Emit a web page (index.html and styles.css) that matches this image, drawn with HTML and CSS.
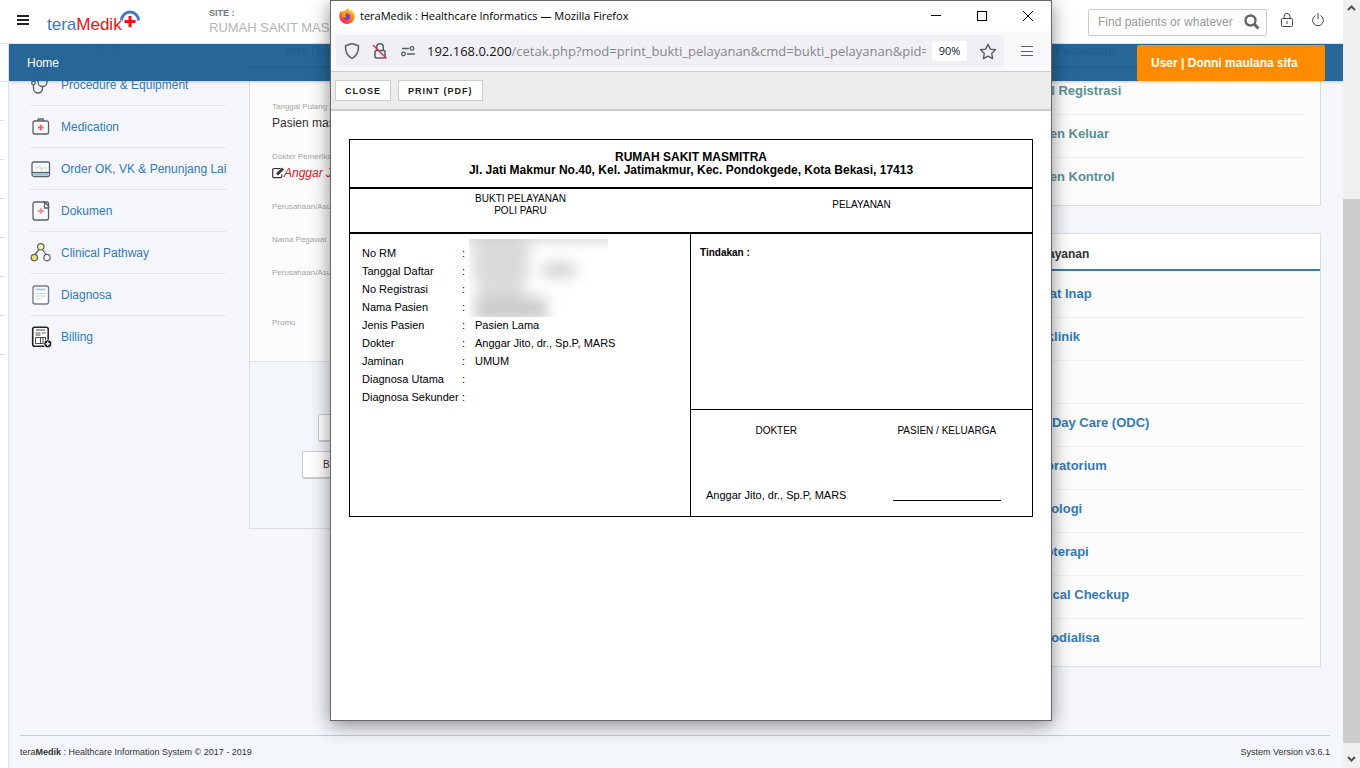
FILE: index.html
```html
<!DOCTYPE html>
<html lang="id">
<head>
<meta charset="utf-8">
<title>teraMedik : Healthcare Informatics</title>
<link rel="stylesheet" href="styles.css">
</head>
<body>
<div class="desktop">
  <div class="app">
    <header class="topbar">
      <button class="icon-btn menu-btn" aria-label="Menu">
        <svg width="12" height="10" viewBox="0 0 12 10"><path d="M0 1h12M0 5h12M0 9h12" stroke="#222" stroke-width="2"/></svg>
      </button>
      <a class="logo" href="#" aria-label="teraMedik">
        <span class="logo-tera">tera</span><span class="logo-medik">Medik</span>
        <svg class="logo-mark" width="20" height="20" viewBox="0 0 20 20"><path d="M1.500 10.500a8.500 8.500 0 0 1 17 0" fill="none" stroke="#3f78cf" stroke-width="3"/><path d="M10 6v11M4.500 11.500h11" stroke="#f00d14" stroke-width="3"/></svg>
      </a>
      <div class="site">
        <div class="site-label">SITE :</div>
        <div class="site-name">RUMAH SAKIT MASMITRA</div>
      </div>
      <div class="tools">
        <form class="search">
          <input class="search-input" type="text" placeholder="Find patients or whatever" aria-label="Find patients or whatever">
          <button class="icon-btn" type="button" aria-label="Search">
            <svg width="16" height="16" viewBox="0 0 16 16"><circle cx="6.500" cy="6.500" r="5" fill="none" stroke="#666" stroke-width="2.400"/><path d="M10 10l4.500 4.500" stroke="#666" stroke-width="3"/></svg>
          </button>
        </form>
        <button class="icon-btn" aria-label="Lock">
          <svg width="12" height="14" viewBox="0 0 12 14" fill="none" stroke="#444"><rect x=".5" y="5.500" width="11" height="8" rx="1"/><path d="M3 5.500V3.500a3 3 0 0 1 6 0v2M6 8v3"/></svg>
        </button>
        <button class="icon-btn" aria-label="Log out">
          <svg width="14" height="14" viewBox="0 0 14 14" fill="none" stroke="#444"><path d="M4.500 2.500a5.400 5.400 0 1 0 5 0M7 0v6"/></svg>
        </button>
      </div>
    </header>

    <div class="below">
      <ul class="strip"><li></li><li></li><li></li><li></li><li></li><li></li><li></li><li></li></ul>
      <div class="content">
        <nav class="nav">
          <a class="nav-home" href="#">Home</a>
          <a class="nav-user" href="#">User | Donni maulana sifa</a>
        </nav>
        <div class="columns">
          <aside class="side">
            <ul class="side-list">
              <li><a href="#"><span class="side-icon"></span><span>Penunjang Medis</span></a></li>
              <li><a href="#"><svg class="side-icon" viewBox="0 0 22 22" fill="none" stroke="#596069" stroke-width="1.300"><path d="M8 4v4a4.500 4.500 0 0 0 9 0V4M12.500 13v1.500a4.500 4.500 0 0 1-9 0V11"/><circle cx="3.500" cy="9" r="1.800"/></svg><span>Procedure &amp; Equipment</span></a></li>
              <li><a href="#"><svg class="side-icon" viewBox="0 0 22 22" fill="none" stroke="#596069" stroke-width="1.300"><rect x="3" y="5" width="15.500" height="13" rx="2" fill="#fff"/><path d="M7.500 5l1-2h4.500l1 2"/><path d="M10.800 8.800v5.600M8 11.600h5.600" stroke="#f0666a" stroke-width="2"/></svg><span>Medication</span></a></li>
              <li><a href="#"><svg class="side-icon" viewBox="0 0 22 22" fill="none" stroke="#596069" stroke-width="1.300"><rect x="2" y="4" width="17.500" height="14.500" rx="2" fill="#fff"/><path d="M3 16.500h15.500" stroke="#9cc3e6" stroke-width="2.500"/><path d="M2 14.500h17.500"/><path d="M5 10h3l1.500-2.500 2 5 1.500-3 1 .5h3" stroke="#c9ced4" stroke-width="1"/></svg><span>Order OK, VK &amp; Penunjang Lain</span></a></li>
              <li><a href="#"><svg class="side-icon" viewBox="0 0 22 22" fill="none" stroke="#596069" stroke-width="1.300"><path d="M5 2h9.500l4 4v12a2 2 0 0 1-2 2H5a2 2 0 0 1-2-2V4a2 2 0 0 1 2-2z" fill="#fff"/><path d="M14.500 2v6h4V3.500a2 2 0 0 0-2-1.500z"/><path d="M10.800 8.200v5.600M8 11h5.600" stroke="#f08d96" stroke-width="2"/></svg><span>Dokumen</span></a></li>
              <li><a href="#"><svg class="side-icon" viewBox="0 0 22 22" fill="none" stroke="#5c6166" stroke-width="1.200"><path d="M9.500 7l-5 6M12 7l4.500 6"/><circle cx="10.800" cy="4.800" r="3.200" fill="#f7f3a6"/><circle cx="4.300" cy="15.600" r="3.200" fill="#f1e168"/><circle cx="17" cy="15.600" r="3.200" fill="#fff"/></svg><span>Clinical Pathway</span></a></li>
              <li><a href="#"><svg class="side-icon" viewBox="0 0 22 22" fill="none"><rect x="3" y="2" width="15.500" height="18" rx="2" fill="#fff" stroke="#757c88" stroke-width="1.400"/><path d="M5.500 5.500h10" stroke="#b9c9e2" stroke-width="2"/><path d="M5.500 9.500h10M5.500 12h10M5.500 15h6" stroke="#c6d3e8"/></svg><span>Diagnosa</span></a></li>
              <li><a href="#"><svg class="side-icon" viewBox="0 0 22 22" fill="none" stroke="#222"><rect x="2.700" y="1.200" width="15.500" height="19" rx="2" fill="#fff" stroke-width="1.600"/><path d="M6 4h9M5.500 7h5M12 7h3.500M5.500 9h5M5.500 11.500h10v6h-10zM10.500 11.500v6M13 11.500v6" stroke-width=".8"/><circle cx="17.800" cy="17.800" r="4" fill="#111" stroke="#fff" stroke-width=".8"/><path d="M17.800 15.600v4.400M15.600 17.800h4.400" stroke="#fff" stroke-width="1.300"/></svg><span>Billing</span></a></li>
            </ul>
          </aside>

          <main class="detail card">
            <h2 class="card-title detail-title">Info Registrasi</h2>
            <dl class="fields">
              <div class="field tall"><dt>Tanggal Pulang</dt><dd>Pasien masih dirawat</dd></div>
              <div class="field tall"><dt>Dokter Pemeriksa</dt><dd class="doctor"><svg width="12" height="12" viewBox="0 0 12 12" fill="none" stroke="#333"><path d="M8.500 1.500H2A1.300 1.300 0 0 0 .7 2.800v6.500a1.300 1.300 0 0 0 1.300 1.300h6.500a1.300 1.300 0 0 0 1.300-1.300V7.500" stroke-width="1.200"/><path d="M5 7.500l6-6" stroke-width="2.600"/></svg><span>Anggar Jito, dr., Sp.P</span></dd></div>
              <div class="field"><dt>Perusahaan/Asuransi</dt></div>
              <div class="field"><dt>Nama Pegawai</dt></div>
              <div class="field tall"><dt>Perusahaan/Asuransi</dt></div>
              <div class="field"><dt>Promo</dt></div>
            </dl>
            <div class="actions">
              <div class="action-row inset"><button class="action">Resume Medis</button></div>
              <div class="action-row"><button class="action">Bukti Pelayanan</button></div>
            </div>
          </main>

          <aside class="right">
            <section class="card">
              <h2 class="card-title">Info Perawatan</h2>
              <ul class="links teal">
                <li><a href="#">Batal Registrasi</a></li>
                <li><a href="#">Pasien Keluar</a></li>
                <li><a href="#">Pasien Kontrol</a></li>
              </ul>
            </section>
            <section class="card">
              <h2 class="card-title">Pelayanan</h2>
              <ul class="links">
                <li><a href="#">Rawat Inap</a></li>
                <li><a href="#">Poliklinik</a></li>
                <li><a href="#">IGD</a></li>
                <li><a href="#">One Day Care (ODC)</a></li>
                <li><a href="#">Laboratorium</a></li>
                <li><a href="#">Radiologi</a></li>
                <li><a href="#">Fisioterapi</a></li>
                <li><a href="#">Medical Checkup</a></li>
                <li><a href="#">Hemodialisa</a></li>
              </ul>
            </section>
          </aside>
        </div>
        <footer class="footer">
          <div class="footer-line">
            <span>tera<b>Medik</b> : Healthcare Information System © 2017 - 2019</span>
            <span>System Version v3.6.1</span>
          </div>
        </footer>
      </div>
    </div>
  </div>

  <div class="scrollbar">
    <svg class="arrow" width="9" height="6" viewBox="0 0 9 6"><path d="M1 5l3.500-3.500L8 5" fill="none" stroke="#505050" stroke-width="2"/></svg>
    <div class="track"><div class="thumb"></div></div>
    <svg class="arrow" width="9" height="6" viewBox="0 0 9 6"><path d="M1 1l3.500 3.500L8 1" fill="none" stroke="#505050" stroke-width="2"/></svg>
  </div>
</div>

<div class="window">
  <div class="titlebar">
    <svg width="16" height="16" viewBox="0 0 16 16">
      <defs><linearGradient id="fox" x1=".8" y1="0" x2=".2" y2="1"><stop offset="0" stop-color="#ffe03a"/><stop offset=".45" stop-color="#ff8a16"/><stop offset="1" stop-color="#f5156c"/></linearGradient></defs>
      <path d="M1.500 3l1.300 1.200C4 3 5 3 6 3.200 6.500 1.500 8 .8 9.500 0c0 1.500 1 2 2 3l1-1c2 2 3.500 4 3.300 7A7.800 7.800 0 0 1 .3 9C.1 6.500.6 4.500 1.500 3z" fill="url(#fox)"/>
      <path d="M5 7c1.500-2 4.500-2 6 0 1 2.500-.5 5-3 5s-3.500-1.500-3.800-3c1 .8 2 .6 3-.2C6.500 8.300 6 7.500 5 7z" fill="#7b3fd0"/>
      <path d="M3 4.500c1.500 0 3 .3 4.500 1.800C6 6.800 6 8 7 9c-1.500.8-3 .3-4-1z" fill="#ff9a1a"/>
    </svg>
    <span class="window-title">teraMedik : Healthcare Informatics — Mozilla Firefox</span>
    <div class="window-buttons">
      <button class="icon-btn" aria-label="Minimize"><svg width="10" height="10" viewBox="0 0 10 10"><path d="M0 4.500h10" stroke="#000"/></svg></button>
      <button class="icon-btn" aria-label="Maximize"><svg width="10" height="10" viewBox="0 0 10 10"><rect x=".5" y=".5" width="9" height="9" fill="none" stroke="#000"/></svg></button>
      <button class="icon-btn" aria-label="Close window"><svg width="10" height="10" viewBox="0 0 10 10"><path d="M0 0l10 10M10 0L0 10" stroke="#000"/></svg></button>
    </div>
  </div>
  <div class="browser-bar">
    <div class="urlbar">
      <svg width="16" height="18" viewBox="0 0 16 18" fill="none" stroke="#5b5b66" stroke-width="1.500"><path d="M8 1.500l6.500 2.200c.3 5.500-1 9.800-6.500 12.600C2.500 13.500 1.200 9.200 1.500 3.700z" stroke-linejoin="round"/></svg>
      <svg width="16" height="18" viewBox="0 0 16 18" fill="none" stroke="#5b5b66" stroke-width="1.500"><rect x="3" y="8.500" width="10" height="7.500" rx="1"/><path d="M4.700 8.500V5a3.300 3.300 0 0 1 6.600 0v3.500"/><path d="M1 3l13.500 13.500" stroke="#e22850" stroke-width="1.400"/></svg>
      <svg width="16" height="12" viewBox="0 0 16 12" fill="none" stroke="#5b5b66" stroke-width="1.300"><path d="M2 3.500h7M7 9h8"/><circle cx="12" cy="3.500" r="1.800"/><circle cx="3.500" cy="9" r="1.800"/></svg>
      <div class="url"><span class="url-host">192.168.0.200</span>/cetak.php?mod=print_bukti_pelayanan&amp;cmd=bukti_pelayanan&amp;pid=1</div>
      <button class="zoom">90%</button>
      <button class="icon-btn" aria-label="Bookmark"><svg width="18" height="17" viewBox="0 0 18 17"><path d="M9 1.300l2.300 4.800 5.200.7-3.800 3.600.9 5.200L9 13.100l-4.600 2.500.9-5.200L1.500 6.800l5.200-.7z" fill="none" stroke="#5b5b66" stroke-width="1.400" stroke-linejoin="round"/></svg></button>
    </div>
    <button class="icon-btn" aria-label="Application menu"><svg width="12" height="10" viewBox="0 0 12 10"><path d="M0 .5h12M0 5.500h12M0 9.500h12" stroke="#5b5b66"/></svg></button>
  </div>
  <div class="print-bar">
    <button class="print-btn">CLOSE</button>
    <button class="print-btn">PRINT (PDF)</button>
  </div>
  <div class="paper">
    <article class="slip">
      <h1 class="slip-head">RUMAH SAKIT MASMITRA<br>Jl. Jati Makmur No.40, Kel. Jatimakmur, Kec. Pondokgede, Kota Bekasi, 17413</h1>
      <div class="slip-sub">
        <div>BUKTI PELAYANAN<br>POLI PARU</div>
        <div>PELAYANAN</div>
      </div>
      <div class="slip-body">
        <div class="patient">
          <table class="data">
            <tr><th>No RM</th><td>:</td><td></td></tr>
            <tr><th>Tanggal Daftar</th><td>:</td><td></td></tr>
            <tr><th>No Registrasi</th><td>:</td><td></td></tr>
            <tr><th>Nama Pasien</th><td>:</td><td></td></tr>
            <tr><th>Jenis Pasien</th><td>:</td><td>Pasien Lama</td></tr>
            <tr><th>Dokter</th><td>:</td><td>Anggar Jito, dr., Sp.P, MARS</td></tr>
            <tr><th>Jaminan</th><td>:</td><td>UMUM</td></tr>
            <tr><th>Diagnosa Utama</th><td>:</td><td></td></tr>
            <tr><th>Diagnosa Sekunder</th><td>:</td><td></td></tr>
          </table>
          <div class="redacted"><svg width="139" height="78" viewBox="0 0 139 78">
            <defs><filter id="soft" x="-50%" y="-50%" width="200%" height="200%"><feGaussianBlur stdDeviation="7"/></filter></defs>
            <rect width="139" height="78" fill="#fff"/>
            <g filter="url(#soft)"><rect x="-10" y="-12" width="170" height="14" fill="#d4d4d4"/><rect x="4" y="0" width="56" height="42" fill="#dadada"/><rect x="74" y="24" width="32" height="14" fill="#cfcfcf"/><rect x="8" y="38" width="48" height="24" fill="#dcdcdc"/><rect x="6" y="58" width="72" height="24" fill="#cccccc"/></g>
          </svg></div>
        </div>
        <div class="service">
          <div class="procedures">Tindakan :</div>
          <div class="signatures">
            <div class="sign"><span class="sign-role">DOKTER</span><span>Anggar Jito, dr., Sp.P, MARS</span></div>
            <div class="sign"><span class="sign-role">PASIEN / KELUARGA</span><span class="sign-line"></span></div>
          </div>
        </div>
      </div>
    </article>
  </div>
</div>
</body>
</html>
```
FILE: styles.css
```css
* { box-sizing: border-box; }
body {
  margin: 0;
  font: 12px/16px "Liberation Sans", Arial, sans-serif;
  color: #333;
  background: #f5f6fb;
}
ul, dl, dd, h1, h2 { margin: 0; padding: 0; }
ul { list-style: none; }
a { color: #337ab7; text-decoration: none; }
button { font: inherit; color: inherit; cursor: pointer; }
svg { display: block; flex: none; }
.icon-btn { display: flex; padding: 0; border: 0; background: none; }

.desktop { display: flex; height: 100vh; overflow: hidden; }
.app { flex: 1; min-width: 0; display: flex; flex-direction: column; }

/* Header */
.topbar {
  position: relative;
  z-index: 2;
  flex: none;
  display: flex;
  align-items: center;
  height: 44px;
  padding: 0 18px 3px 17px;
  background: #fff;
  border-bottom: 1px solid #dfe1e6;
}
.logo { display: flex; align-items: center; width: 162px; margin: 10px 0 0 18px; font-size: 17px; }
.logo-tera { color: #3f78cf; }
.logo-medik { color: #f00d14; }
.logo-mark { margin: -10px 0 0 -2px; }
.site { padding-top: 3px; }
.site-label { font-size: 9px; line-height: 12px; font-weight: bold; color: #687883; }
.site-name { font-size: 13px; line-height: 18px; color: #b5b5b5; }
.tools { display: flex; align-items: center; gap: 18px; margin-left: auto; }
.search {
  display: flex;
  align-items: center;
  width: 179px;
  height: 27px;
  margin: 4px -4px 0 0;
  padding: 0 6px 0 9px;
  border: 1px solid #ccc;
  border-radius: 2px;
}
.search-input { flex: 1; min-width: 0; padding: 0; border: 0; outline: 0; font: inherit; background: none; }
.search-input::placeholder { color: #999; }

/* Page body */
.below { flex: 1; min-height: 0; display: flex; }
.strip { flex: none; width: 9px; margin-top: -1px; background: #fff; border-right: 1px solid #dfe1e6; }
.strip li { width: 5px; height: 39px; border-bottom: 1px solid #dfe1e6; }
.strip li:first-child { width: 8px; }
.content { position: relative; flex: 1; min-width: 0; display: flex; flex-direction: column; overflow: hidden; }
.nav {
  position: absolute;
  z-index: 1;
  top: 0;
  left: 0;
  right: 0;
  display: flex;
  justify-content: space-between;
  height: 37px;
  padding: 1px 18px 0;
  background: rgba(33, 97, 149, 0.97);
  box-shadow: 0 1px 3px rgba(0, 0, 0, 0.2);
}
.nav a { color: #fff; line-height: 36px; }
.nav-user { width: 188px; padding-left: 14px; border-radius: 2px; background: #ff8c00; font-weight: bold; }
.columns { flex: 1; min-height: 0; display: flex; padding-right: 22px; }

.side { flex: none; width: 240px; padding: 0 23px 0 21px; }
.side-list { margin-top: -22px; }
.side-list li { height: 42px; border-bottom: 1px solid #e2e4ea; overflow: hidden; }
.side-list li:last-child { border-bottom: 0; }
.side-list a { display: flex; align-items: center; gap: 9px; height: 42px; white-space: nowrap; }
.side-icon { flex: none; width: 22px; height: 22px; }

.card { border: 1px solid #dcdde0; background: #fcfcfc; }
.card-title {
  height: 37px;
  padding-left: 22px;
  border-bottom: 2px solid #337ab7;
  background: #fff;
  font-size: 12px;
  line-height: 40px;
}
.detail { flex: 1; align-self: flex-start; min-width: 0; margin-top: -14px; }
.detail-title { padding-left: 36px; }
.fields { height: 293px; padding: 34px 22px 0; }
.field { height: 33px; }
.field.tall { height: 50px; }
.field dt { font-size: 8px; line-height: 10px; color: #a5a5a5; }
.field dd { padding-top: 3px; }
.doctor { display: flex; align-items: center; color: #d9151b; font-style: italic; }
.actions { height: 167px; padding: 52px 52px 0; border-top: 1px solid #dcdde0; background: #f3f6fb; }
.action-row { margin-bottom: 9px; }
.action-row.inset { padding-left: 16px; }
.action {
  height: 28px;
  padding: 0 20px;
  border: 1px solid #ccc;
  border-bottom-width: 2px;
  border-radius: 2px;
  background: #fff;
  font-size: 10px;
}

.right { flex: none; width: 314px; margin: -14px 0 0 16px; display: flex; flex-direction: column; gap: 27px; }
.links { padding: 4px 14px 4px 15px; }
.links li { height: 43px; border-bottom: 1px solid #f0f0f0; }
.links li:last-child { border-bottom: 0; }
.links a { font-size: 13px; line-height: 38px; font-weight: bold; }
.teal a { color: #5a9094; }

.footer { flex: none; padding: 10px 13px 0 11px; background: #f3f6fb; }
.footer-line {
  display: flex;
  justify-content: space-between;
  border-top: 1px solid #c8cacf;
  font-size: 9px;
  line-height: 32px;
}

/* Page scrollbar */
.scrollbar { flex: none; width: 17px; display: flex; flex-direction: column; align-items: center; background: #f0f0f0; }
.arrow { margin: 5px 0 6px; }
.track { flex: 1; align-self: stretch; display: flex; flex-direction: column; justify-content: flex-end; padding-bottom: 8px; }
.thumb { height: 75%; background: #cdcdcd; }

/* Browser window lying over the page */
.window {
  position: absolute;
  z-index: 5;
  top: 0;
  bottom: 47px;
  left: 330px;
  right: 308px;
  display: flex;
  flex-direction: column;
  border: 1px solid #666;
  background: #fff;
  box-shadow: 0 4px 18px rgba(0, 0, 0, 0.45);
  overflow: hidden;
}
.titlebar { display: flex; align-items: center; gap: 5px; height: 30px; padding: 0 18px 0 8px; color: #000; }
.window-title { font: 11px/16px "Open Sans", "Noto Sans", sans-serif; }
.window-buttons { display: flex; gap: 36px; margin-left: auto; }
.browser-bar { display: flex; align-items: center; gap: 17px; height: 41px; padding: 0 18px 0 5px; background: #f9f9fb; border-bottom: 1px solid #ccc; }
.urlbar {
  flex: 1;
  min-width: 0;
  display: flex;
  align-items: center;
  gap: 12px;
  height: 32px;
  padding: 0 7px 0 8px;
  border-radius: 4px;
  background: #f0f0f4;
}
.url { flex: 1; min-width: 0; margin: 0 -6px 0 -1px; overflow: hidden; white-space: nowrap; font: 13px/20px "Open Sans", "Noto Sans", sans-serif; color: #85858d; }
.url-host { color: #15141a; }
.zoom { width: 35px; height: 20px; padding: 0; border: 0; border-radius: 3px; background: #fff; font: 11px/20px "Open Sans", "Noto Sans", sans-serif; color: #15141a; }
.print-bar { display: flex; align-items: center; gap: 7px; height: 39px; padding: 0 4px; border-bottom: 2px solid #ccc; background: #ececec; }
.print-btn { height: 21px; padding: 0 9px; border: 1px solid #ccc; background: #fff; font-size: 9px; font-weight: bold; letter-spacing: 1px; color: #222; }

/* Printed slip */
.paper { flex: 1; padding: 28px 18px; color: #000; }
.slip { border: 1px solid #000; }
.slip-head { padding: 11px 0 10px; border-bottom: 2px solid #000; font-size: 12px; line-height: 13px; text-align: center; }
.slip-sub { display: grid; grid-template-columns: 1fr 1fr; height: 45px; padding: 4px 0 0; border-bottom: 2px solid #000; font-size: 10px; line-height: 12px; text-align: center; }
.slip-sub div:last-child { padding-top: 6px; }
.slip-body { display: grid; grid-template-columns: 340fr 342fr; height: 282px; }
.patient { position: relative; padding: 10px 12px; }
.data { border-collapse: collapse; font-size: 11px; line-height: 18px; }
.data th { width: 100px; padding: 0; font-weight: normal; text-align: left; white-space: nowrap; }
.data td { height: 18px; padding: 0; }
.data td:nth-child(2) { width: 13px; }
.redacted { position: absolute; top: 5px; left: 119px; overflow: hidden; }
.service { display: flex; flex-direction: column; border-left: 1px solid #000; }
.procedures { flex: 1; padding: 11px 9px; font-size: 10px; font-weight: bold; }
.signatures { display: grid; grid-template-columns: 1fr 1fr; height: 107px; padding: 13px 0 0; border-top: 1px solid #000; font-size: 11px; }
.sign { display: flex; flex-direction: column; align-items: center; justify-content: space-between; height: 80px; }
.sign-role { font-size: 10px; }
.sign-line { width: 108px; margin-bottom: 2px; border-bottom: 1px solid #000; }
```
